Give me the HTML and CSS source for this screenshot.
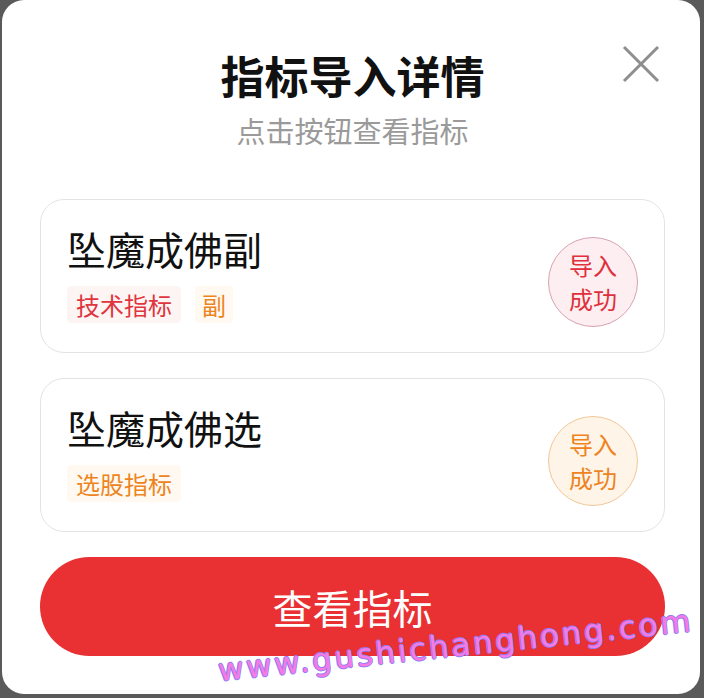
FILE: index.html
```html
<!DOCTYPE html>
<html lang="zh-CN">
<head>
    <meta charset="UTF-8">
    <meta name="viewport" content="width=device-width, initial-scale=1.0">
    <title>指标导入详情</title>
    <link rel="stylesheet" href="styles.css">
</head>
<body>

    <!-- 导入详情弹窗 -->
    <div class="modal">
        <span class="close-btn">
            <svg width="38" height="38" viewBox="0 0 38 38">
                <path d="M2 2 L36 36 M36 2 L2 36" stroke="#8e8e8e" stroke-width="3" fill="none"/>
            </svg>
        </span>

        <h1 class="modal-title">指标导入详情</h1>
        <p class="modal-subtitle">点击按钮查看指标</p>

        <div class="card">
            <div class="card-info">
                <h2 class="card-name">坠魔成佛副</h2>
                <div class="tags">
                    <span class="tag tag-red">技术指标</span>
                    <span class="tag tag-orange tag-small">副</span>
                </div>
            </div>
            <div class="badge badge-red">导入<br>成功</div>
        </div>

        <div class="card">
            <div class="card-info">
                <h2 class="card-name">坠魔成佛选</h2>
                <div class="tags">
                    <span class="tag tag-orange">选股指标</span>
                </div>
            </div>
            <div class="badge badge-orange">导入<br>成功</div>
        </div>

        <button class="main-btn">查看指标</button>

        <div class="watermark">www.gushichanghong.com</div>
    </div>

</body>
</html>
```

FILE: styles.css
```css
body {
    margin: 0;
    padding: 0;
    background-color: #5a5a5a;
    font-family: "Noto Sans CJK SC", "Noto Sans", sans-serif;
}
.modal {
    position: relative;
    width: 698px;
    height: 694px;
    margin-left: 2px;
    box-sizing: border-box;
    padding: 47px 35px 0 38px;
    background-color: #fff;
    border-radius: 22px;
    overflow: hidden;
}
.close-btn {
    position: absolute;
    left: 620px;
    top: 45px;
    width: 38px;
    height: 38px;
}
.modal-title {
    margin: 0;
    text-align: center;
    font-size: 44px;
    line-height: 56px;
    font-weight: 600;
    color: #111;
}
.modal-subtitle {
    margin: 7px 0 49px 0;
    text-align: center;
    font-size: 29px;
    line-height: 40px;
    color: #9a9a9a;
}
.card {
    display: flex;
    align-items: center;
    justify-content: space-between;
    height: 154px;
    box-sizing: border-box;
    padding: 25px 26px 30px 26px;
    margin-bottom: 25px;
    border: 1px solid #e3e3e3;
    border-radius: 24px;
}
.card-name {
    margin: 0;
    font-size: 39px;
    line-height: 48px;
    font-weight: 400;
    color: #111;
}
.tags {
    display: flex;
    gap: 14px;
    margin-top: 14px;
}
.tag {
    font-size: 24px;
    line-height: 37px;
    padding: 0 9px;
    border-radius: 4px;
}
.tag-small {
    padding: 0 7px;
}
.tag-red {
    color: #e0343e;
    background-color: #fdf4f4;
}
.tag-orange {
    color: #ee8420;
    background-color: #fff9f1;
}
.badge {
    width: 90px;
    height: 90px;
    margin-top: 16px;
    box-sizing: border-box;
    border-radius: 50%;
    display: flex;
    align-items: center;
    justify-content: center;
    text-align: center;
    font-size: 24px;
    line-height: 34px;
}
.badge-red {
    color: #e0303c;
    background-color: #fdeef1;
    border: 1px solid #d7a2b2;
}
.badge-orange {
    color: #ee8320;
    background-color: #fef4e8;
    border: 1px solid #f0c898;
}
.main-btn {
    display: block;
    width: 100%;
    height: 99px;
    margin-top: 1px;
    border: none;
    border-radius: 50px;
    background-color: #e93033;
    color: #fff;
    font-family: "Noto Sans CJK SC", sans-serif;
    font-size: 40px;
    cursor: pointer;
}
.watermark {
    position: absolute;
    left: 218px;
    top: 652px;
    transform: rotate(-6deg);
    transform-origin: left bottom;
    font-family: "DejaVu Sans", sans-serif;
    font-size: 31px;
    letter-spacing: 2.8px;
    color: #f77ae4;
    text-shadow: 1px 0 #8c7df8, -1px 0 #8c7df8, 0 1px #8c7df8, 0 -1px #8c7df8;
    white-space: nowrap;
}
```
